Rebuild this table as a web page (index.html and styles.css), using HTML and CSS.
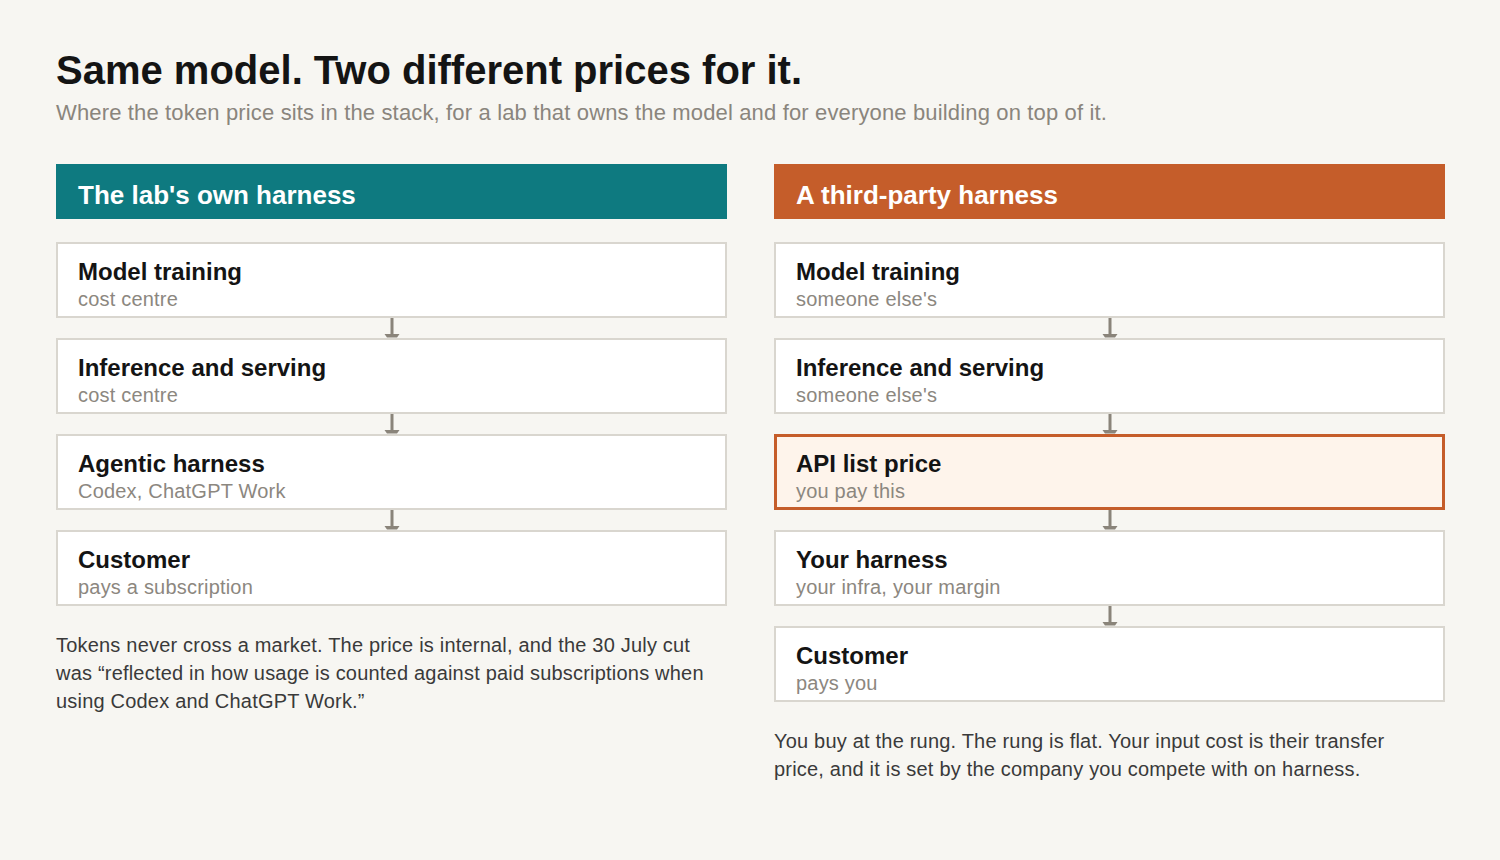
FILE: index.html
```html
<!DOCTYPE html>
<html lang="en">
<head>
<meta charset="utf-8">
<title>Same model. Two different prices for it.</title>
<link rel="stylesheet" href="styles.css">
</head>
<body>
<main class="page">
  <header class="intro">
    <h1 class="title">Same model. Two different prices for it.</h1>
    <p class="subtitle">Where the token price sits in the stack, for a lab that owns the model and for everyone building on top of it.</p>
  </header>
  <div class="columns">
    <section class="column">
      <h2 class="bar bar-teal">The lab's own harness</h2>
      <div class="stack">
        <div class="rung"><div class="rung-title">Model training</div><div class="rung-sub">cost centre</div></div>
        <div class="arrow"><svg viewBox="0 0 16 20" width="16" height="20"><rect x="6.5" y="0" width="3" height="17"/><polygon points="0.5,16 15.5,16 13,19.5 3,19.5"/></svg></div>
        <div class="rung"><div class="rung-title">Inference and serving</div><div class="rung-sub">cost centre</div></div>
        <div class="arrow"><svg viewBox="0 0 16 20" width="16" height="20"><rect x="6.5" y="0" width="3" height="17"/><polygon points="0.5,16 15.5,16 13,19.5 3,19.5"/></svg></div>
        <div class="rung"><div class="rung-title">Agentic harness</div><div class="rung-sub">Codex, ChatGPT Work</div></div>
        <div class="arrow"><svg viewBox="0 0 16 20" width="16" height="20"><rect x="6.5" y="0" width="3" height="17"/><polygon points="0.5,16 15.5,16 13,19.5 3,19.5"/></svg></div>
        <div class="rung"><div class="rung-title">Customer</div><div class="rung-sub">pays a subscription</div></div>
      </div>
      <p class="note">Tokens never cross a market. The price is internal, and the 30 July cut was “reflected in how usage is counted against paid subscriptions when using Codex and ChatGPT Work.”</p>
    </section>
    <section class="column">
      <h2 class="bar bar-orange">A third-party harness</h2>
      <div class="stack">
        <div class="rung"><div class="rung-title">Model training</div><div class="rung-sub">someone else's</div></div>
        <div class="arrow"><svg viewBox="0 0 16 20" width="16" height="20"><rect x="6.5" y="0" width="3" height="17"/><polygon points="0.5,16 15.5,16 13,19.5 3,19.5"/></svg></div>
        <div class="rung"><div class="rung-title">Inference and serving</div><div class="rung-sub">someone else's</div></div>
        <div class="arrow"><svg viewBox="0 0 16 20" width="16" height="20"><rect x="6.5" y="0" width="3" height="17"/><polygon points="0.5,16 15.5,16 13,19.5 3,19.5"/></svg></div>
        <div class="rung rung-hl"><div class="rung-title">API list price</div><div class="rung-sub">you pay this</div></div>
        <div class="arrow"><svg viewBox="0 0 16 20" width="16" height="20"><rect x="6.5" y="0" width="3" height="17"/><polygon points="0.5,16 15.5,16 13,19.5 3,19.5"/></svg></div>
        <div class="rung"><div class="rung-title">Your harness</div><div class="rung-sub">your infra, your margin</div></div>
        <div class="arrow"><svg viewBox="0 0 16 20" width="16" height="20"><rect x="6.5" y="0" width="3" height="17"/><polygon points="0.5,16 15.5,16 13,19.5 3,19.5"/></svg></div>
        <div class="rung"><div class="rung-title">Customer</div><div class="rung-sub">pays you</div></div>
      </div>
      <p class="note">You buy at the rung. The rung is flat. Your input cost is their transfer price, and it is set by the company you compete with on harness.</p>
    </section>
  </div>
</main>
</body>
</html>
```

FILE: styles.css
```css
html, body {
  margin: 0;
  padding: 0;
  background: #f7f6f2;
}
body {
  font-family: "Liberation Sans", Arial, Helvetica, sans-serif;
  color: #141414;
  width: 1500px;
  height: 860px;
  overflow: hidden;
}
.page {
  padding: 47px 55px 0 56px;
}
.intro {
  display: flex;
  flex-direction: column;
}
.title {
  margin: 0;
  font-size: 40px;
  line-height: 46px;
  font-weight: 700;
  color: #141414;
}
.subtitle {
  margin: 7px 0 0;
  font-size: 22px;
  line-height: 26px;
  letter-spacing: 0.15px;
  color: #8a857d;
}
.columns {
  margin-top: 38px;
  display: grid;
  grid-template-columns: 671px 671px;
  column-gap: 47px;
  align-items: start;
}
.column {
  display: flex;
  flex-direction: column;
}
.bar {
  margin: 0;
  height: 55px;
  line-height: 62px;
  padding: 0 22px;
  font-size: 26px;
  font-weight: 700;
  color: #ffffff;
}
.bar-teal { background: #0e7a80; }
.bar-orange { background: #c55d2a; }
.stack {
  margin-top: 23px;
  display: flex;
  flex-direction: column;
}
.rung {
  height: 76px;
  box-sizing: border-box;
  border: 2px solid #d9d6cf;
  background: #ffffff;
  padding: 13px 20px 0;
}
.rung-hl {
  border: 3px solid #c55d2a;
  background: #fef4eb;
  padding: 12px 19px 0;
}
.rung-title {
  font-size: 24px;
  line-height: 29px;
  font-weight: 700;
  color: #141414;
}
.rung-sub {
  font-size: 20px;
  line-height: 26px;
  letter-spacing: 0.2px;
  color: #8c877f;
}
.arrow {
  height: 20px;
  display: flex;
  justify-content: center;
}
.arrow svg {
  display: block;
  fill: #8a847a;
}
.note {
  margin: 25px 0 0;
  max-width: 655px;
  font-size: 20px;
  line-height: 28px;
  letter-spacing: 0.2px;
  color: #3a3a3a;
}
```
